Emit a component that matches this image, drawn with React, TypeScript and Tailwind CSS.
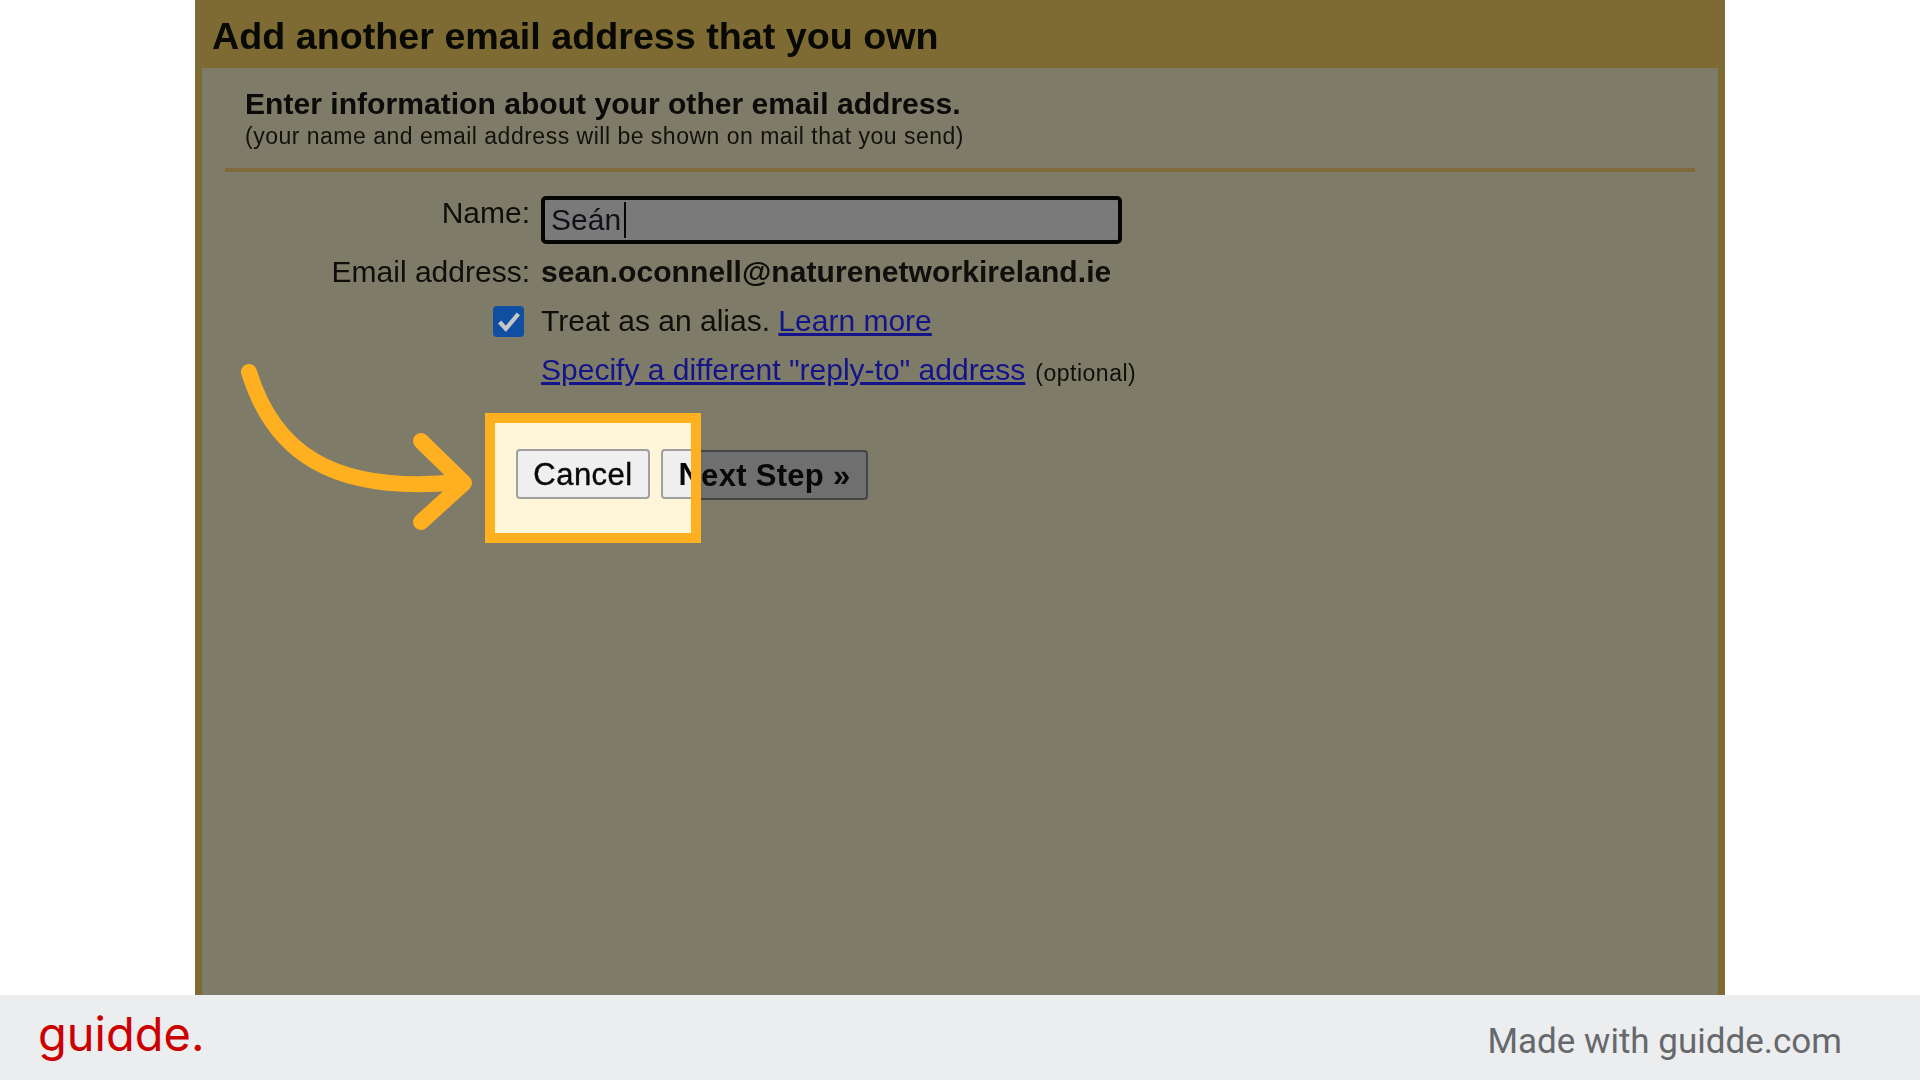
export default function App() {
  return (
    <div className="relative flex h-[1080px] w-[1920px] flex-col overflow-hidden bg-white font-['Liberation_Sans',sans-serif]">
      <main className="flex h-[995px] justify-center">
        <section className="flex w-[1530px] flex-col bg-[#7e6b34] px-[7px]">
          <h1 className="h-[68px] pl-[10px] pt-[16px] text-[37.7px] font-bold leading-[40px] text-[#080804] blur-[0.5px]">
            Add another email address that you own
          </h1>
          <div className="flex-1 bg-[#7e7b68] pt-[18px] blur-[0.5px]">
            <h2 className="pl-[43px] text-[30.1px] font-bold leading-[36px] text-[#0a0a08]">
              Enter information about your other email address.
            </h2>
            <p className="pl-[43px] text-[23px] leading-[28px] tracking-[0.5px] text-[#12110c]">
              (your name and email address will be shown on mail that you send)
            </p>
            <div className="ml-[23px] mr-[23px] mt-[18px] h-[4px] bg-[#80693a]" />
            <div className="mt-[24px] grid grid-cols-[328px_1fr] gap-x-[11px] text-[30px] leading-[36px] text-[#0e0e0a]">
              <label className="-mt-[1px] text-right">Name:</label>
              <div className="flex h-[48px] w-[581px] items-center rounded-[5px] border-[4px] border-[#050505] bg-[#7a7a7a] pl-[6px] text-[#0e1216]">
                Seán<span className="ml-[3px] h-[36px] w-[2px] bg-[#050505]" />
              </div>
              <div className="mt-[10px] text-right">Email address:</div>
              <div className="mt-[10px] font-bold tracking-[0.07px]">sean.oconnell@naturenetworkireland.ie</div>
              <div className="mt-[13px] flex justify-end pr-[6px]">
                <span className="mt-[3px] flex h-[31px] w-[31px] items-center justify-center rounded-[4px] bg-[#0f4ea0]">
                  <svg viewBox="0 0 24 24" className="h-[30px] w-[30px]" fill="none" stroke="#c4c6c8" strokeWidth="3.4">
                    <path d="M4.5 12l5 5.5L19.5 5.5" />
                  </svg>
                </span>
              </div>
              <div className="mt-[13px]">
                Treat as an alias. <a className="text-[#14148a] underline">Learn more</a>
              </div>
              <div className="mt-[13px] col-start-2 flex items-baseline">
                <a className="text-[#14148a] underline">Specify a different "reply-to" address</a>
                <span className="ml-[10px] translate-y-[1px] text-[23px] tracking-[0.5px]">(optional)</span>
              </div>
              <div className="col-start-2 mt-[60px] ml-[-25px] flex gap-[11px] text-[#080808]">
                <button className="h-[50px] w-[134px] rounded-[4px] border-2 border-[#555] bg-[#6f6f6f] text-[31px] leading-none tracking-[0.5px] [-webkit-text-stroke:0.4px_#080808]">Cancel</button>
                <button className="h-[50px] w-[207px] rounded-[4px] border-2 border-[#454545] bg-[#6f6f6f] text-[31px] font-bold leading-none tracking-[0.3px]">Next Step »</button>
              </div>
            </div>
          </div>
        </section>
      </main>

      <footer className="flex h-[85px] items-center justify-between bg-[#ecedef] pl-[38px] pr-[78px]">
        <span className="pb-[8px] font-['Inter',sans-serif] text-[47px] font-normal leading-none text-[#cc0000]">guidde.</span>
        <span className="pt-[10px] pl-[1px] font-['Roboto',sans-serif] text-[35px] text-[#66686b]">Made with guidde.com</span>
      </footer>

      <div className="absolute left-[485px] top-[413px] h-[130px] w-[216px] overflow-hidden border-[10px] border-[#ffb020] bg-[#fff5d9]">
        <div className="flex gap-[11px] pl-[21px] pt-[26px] text-[#080808] blur-[0.5px]">
          <button className="h-[50px] w-[134px] shrink-0 rounded-[4px] border-2 border-[#a0a0a0] bg-[#efefef] text-[31px] leading-none tracking-[0.5px] [-webkit-text-stroke:0.4px_#080808]">Cancel</button>
          <button className="h-[50px] w-[207px] shrink-0 rounded-[4px] border-2 border-[#a0a0a0] bg-[#efefef] text-[31px] font-bold leading-none tracking-[0.3px]">Next Step »</button>
        </div>
      </div>

      <svg className="absolute left-[235px] top-[360px] h-[180px] w-[250px]" viewBox="0 0 250 180" fill="none" stroke="#ffb020" strokeWidth="16" strokeLinecap="round" strokeLinejoin="round">
        <path d="M14 12 C38 90 95 135 224 122" />
        <path d="M186 81 L229 123 L186 162" />
      </svg>
    </div>
  );
}
